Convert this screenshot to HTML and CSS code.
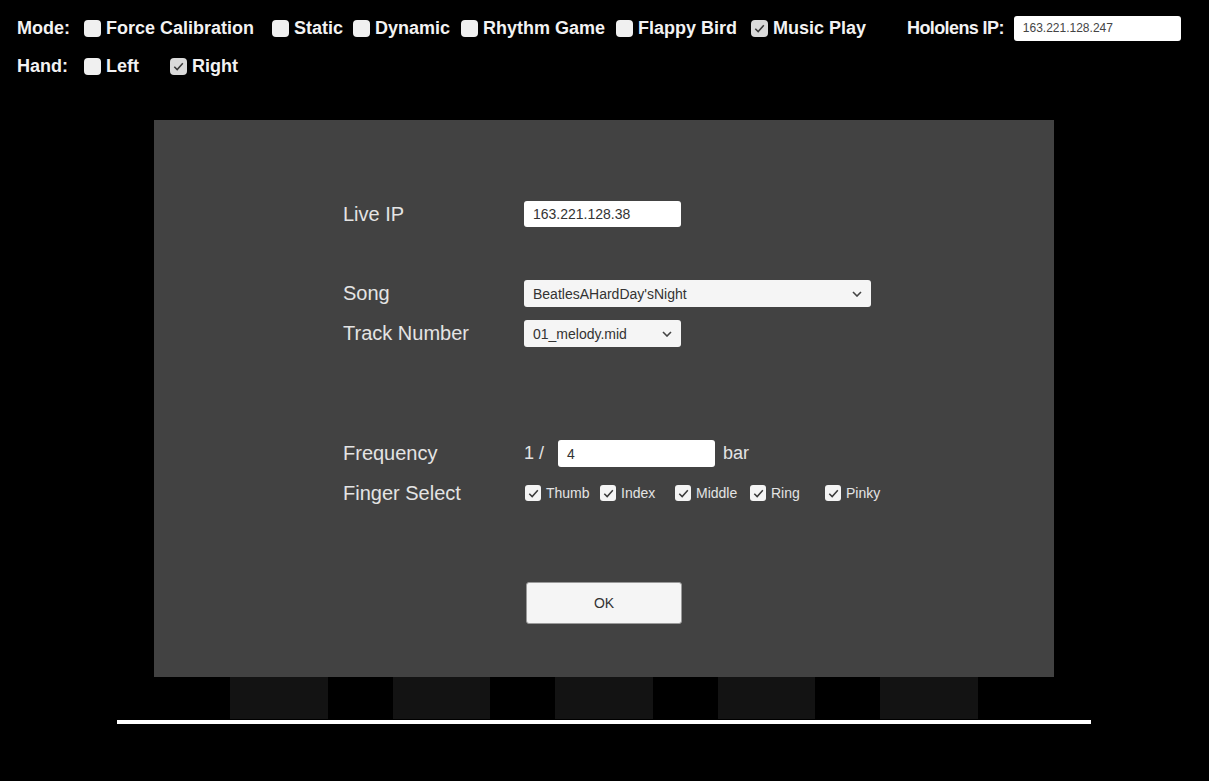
FILE: index.html
```html
<!DOCTYPE html>
<html>
<head>
<meta charset="utf-8">
<link rel="stylesheet" href="styles.css">
</head>
<body>
<div class="topbar">
  <div class="toprow">
    <span class="toplabel">Mode:</span>
    <span class="toggle w-force"><span class="box"></span><span>Force Calibration</span></span>
    <span class="toggle w-static"><span class="box"></span><span>Static</span></span>
    <span class="toggle w-dynamic"><span class="box"></span><span>Dynamic</span></span>
    <span class="toggle w-rhythm"><span class="box"></span><span>Rhythm Game</span></span>
    <span class="toggle w-flappy"><span class="box"></span><span>Flappy Bird</span></span>
    <span class="toggle w-music"><span class="box checked"><svg viewBox="0 0 16 16"><path d="M3.5 8.2 L6.6 11.3 L12.6 4.6" /></svg></span><span>Music Play</span></span>
    <span class="iplabel">Hololens IP:</span>
    <span class="topinput">163.221.128.247</span>
  </div>
  <div class="toprow">
    <span class="toplabel">Hand:</span>
    <span class="toggle w-left"><span class="box"></span><span>Left</span></span>
    <span class="toggle"><span class="box checked"><svg viewBox="0 0 16 16"><path d="M3.5 8.2 L6.6 11.3 L12.6 4.6" /></svg></span><span>Right</span></span>
  </div>
</div>

<div class="panel">
  <div class="row r-ip">
    <span class="label">Live IP</span>
    <span class="field short">163.221.128.38</span>
  </div>
  <div class="row r-song">
    <span class="label">Song</span>
    <span class="field dropdown long">BeatlesAHardDay'sNight<svg class="chev" viewBox="0 0 10 6"><path d="M1 1 L5 5 L9 1"/></svg></span>
  </div>
  <div class="row r-track">
    <span class="label">Track Number</span>
    <span class="field dropdown short">01_melody.mid<svg class="chev" viewBox="0 0 10 6"><path d="M1 1 L5 5 L9 1"/></svg></span>
  </div>
  <div class="row r-freq">
    <span class="label">Frequency</span>
    <span class="frac">1 /</span>
    <span class="field short">4</span>
    <span class="unit">bar</span>
  </div>
  <div class="row r-finger">
    <span class="label">Finger Select</span>
    <div class="fingers">
      <span class="ftoggle"><span class="fbox"><svg viewBox="0 0 16 16"><path d="M3.5 8.2 L6.6 11.3 L12.6 4.6" /></svg></span><span>Thumb</span></span>
      <span class="ftoggle"><span class="fbox"><svg viewBox="0 0 16 16"><path d="M3.5 8.2 L6.6 11.3 L12.6 4.6" /></svg></span><span>Index</span></span>
      <span class="ftoggle"><span class="fbox"><svg viewBox="0 0 16 16"><path d="M3.5 8.2 L6.6 11.3 L12.6 4.6" /></svg></span><span>Middle</span></span>
      <span class="ftoggle"><span class="fbox"><svg viewBox="0 0 16 16"><path d="M3.5 8.2 L6.6 11.3 L12.6 4.6" /></svg></span><span>Ring</span></span>
      <span class="ftoggle"><span class="fbox"><svg viewBox="0 0 16 16"><path d="M3.5 8.2 L6.6 11.3 L12.6 4.6" /></svg></span><span>Pinky</span></span>
    </div>
  </div>
  <div class="row r-ok">
    <span class="okbtn">OK</span>
  </div>
</div>

<div class="keys">
  <span class="key"></span>
  <span class="key"></span>
  <span class="key"></span>
  <span class="key"></span>
  <span class="key"></span>
</div>
<div class="line"></div>
</body>
</html>
```

FILE: styles.css
```css
html, body {
  margin: 0;
  padding: 0;
  background: #000;
}
body {
  width: 1209px;
  height: 781px;
  overflow: hidden;
  font-family: "Liberation Sans", Arial, sans-serif;
}

.topbar {
  padding: 9px 0 0 17px;
}
.toprow {
  display: flex;
  align-items: center;
  height: 38px;
  color: #f2f2f2;
  font-weight: bold;
  font-size: 18px;
}
.toplabel {
  width: 67px;
}
.toggle {
  display: flex;
  align-items: center;
  gap: 5px;
}
.w-force { width: 188px; }
.w-static { width: 81px; }
.w-dynamic { width: 108px; }
.w-rhythm { width: 155px; }
.w-flappy { width: 135px; }
.w-music { width: 156px; }
.w-left { width: 86px; }

.box {
  width: 17px;
  height: 17px;
  border-radius: 4px;
  background: #f0f0f0;
  display: flex;
  align-items: center;
  justify-content: center;
}
.box.checked {
  background: #dadada;
}
.box svg, .fbox svg {
  width: 15px;
  height: 15px;
  fill: none;
  stroke: #3a3a3a;
  stroke-width: 1.6;
}
.iplabel {
  margin-right: 10px;
  letter-spacing: -0.6px;
}
.topinput {
  width: 167px;
  height: 25px;
  box-sizing: border-box;
  background: #fff;
  border-radius: 3px;
  padding-left: 9px;
  display: flex;
  align-items: center;
  font-weight: normal;
  font-size: 12px;
  color: #444;
}

.panel {
  width: 900px;
  height: 557px;
  margin: 35px 0 0 154px;
  background: #424242;
  box-sizing: border-box;
  padding: 81px 0 0 189px;
}
.row {
  display: flex;
  align-items: center;
  height: 26px;
}
.r-song { margin-top: 53px; height: 27px; }
.r-track { margin-top: 13px; height: 27px; }
.r-freq { margin-top: 93px; height: 27px; }
.r-finger { margin-top: 13px; }
.r-ok { margin-top: 76px; height: 42px; padding-left: 183px; }

.label {
  width: 181px;
  color: #e4e4e4;
  font-size: 20px;
}
.field {
  height: 100%;
  box-sizing: border-box;
  background: #fff;
  border-radius: 3px;
  padding-left: 9px;
  display: flex;
  align-items: center;
  font-size: 14px;
  color: #333;
}
.field.short { width: 157px; }
.field.long { width: 347px; }
.dropdown {
  background: #f5f5f5;
  justify-content: space-between;
  padding-right: 9px;
}
.chev {
  width: 10px;
  height: 6px;
  fill: none;
  stroke: #444;
  stroke-width: 1.6;
}
.frac {
  width: 34px;
  color: #e4e4e4;
  font-size: 18px;
}
.unit {
  margin-left: 8px;
  color: #e4e4e4;
  font-size: 18px;
}
.fingers {
  display: flex;
  align-items: center;
  margin-left: 1px;
}
.ftoggle {
  width: 75px;
  display: flex;
  align-items: center;
  gap: 5px;
  color: #e4e4e4;
  font-size: 14px;
}
.fbox {
  width: 16px;
  height: 16px;
  border-radius: 3px;
  background: #f4f4f4;
  display: flex;
  align-items: center;
  justify-content: center;
}
.okbtn {
  width: 156px;
  height: 42px;
  box-sizing: border-box;
  background: #f5f5f5;
  border: 1px solid #9a9a9a;
  border-radius: 3px;
  display: flex;
  align-items: center;
  justify-content: center;
  font-size: 14px;
  color: #333;
}

.keys {
  display: flex;
  gap: 65px;
  height: 42px;
  padding-left: 230px;
}
.key {
  width: 97.5px;
  background: #131313;
}
.line {
  width: 974px;
  height: 4px;
  margin: 1px 0 0 117px;
  background: #fff;
}
```
